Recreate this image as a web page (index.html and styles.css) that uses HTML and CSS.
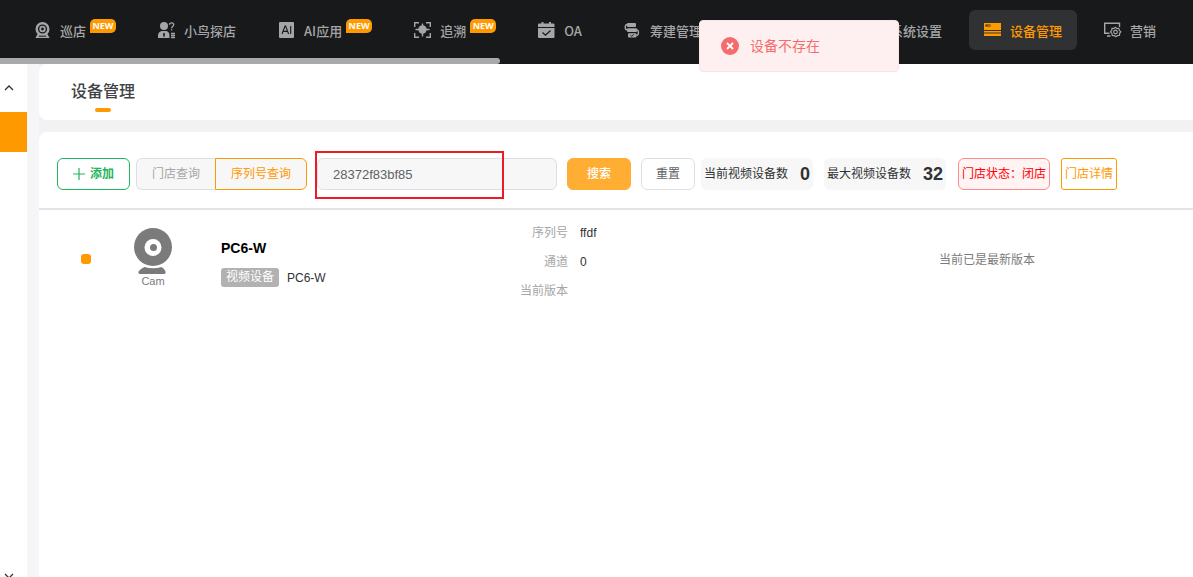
FILE: index.html
```html
<!DOCTYPE html>
<html lang="zh-CN">
<head>
<meta charset="utf-8">
<title>设备管理</title>
<link rel="stylesheet" href="styles.css">
</head>
<body>
<header class="topbar">
  <nav class="nav">
    <a class="nav-item" href="#">
      <svg class="icon" viewBox="0 0 16 16"><circle cx="8.500" cy="7" r="5.800" fill="none" stroke="currentColor" stroke-width="2.400"/><circle cx="8.500" cy="7" r="2.300" fill="none" stroke="currentColor" stroke-width="1.800"/><path d="M3.600 12h9.800l2.200 3.900H1.400z" fill="currentColor"/><path d="M4.800 14.200h7.400" stroke="#18191b"/></svg>
      <span class="nav-text">巡店</span><span class="badge">NEW</span>
    </a>
    <a class="nav-item" href="#">
      <svg class="icon" viewBox="0 0 16 16"><circle cx="6" cy="4" r="4" fill="currentColor"/><path d="M0 16v-2.500C0 10.500 2 9 4.500 9h3c2.500 0 4 1.500 4 4.500V16z" fill="currentColor"/><path d="M6 10.500l1 1.500-.6 3h-.8L5 12z" fill="#18191b"/><path d="M11.500 2.800c0-2.600 4.200-2.600 4.200 0 0 1.700-2.100 1.600-2.100 3.400M13.600 7.200v1.300M13 11.500h4M13 13.500h4M13 15.500h4" fill="none" stroke="currentColor" stroke-width="1.300"/></svg>
      <span class="nav-text">小鸟探店</span>
    </a>
    <a class="nav-item" href="#">
      <svg class="icon" viewBox="0 0 16 16"><rect x="1" width="15" height="16" rx="1" fill="currentColor"/><path d="M4 12l3-8h.6l3 8M5 9.400h4.600M12.700 4v8" fill="none" stroke="#18191b" stroke-width="1.100"/></svg>
      <span class="nav-text">AI应用</span><span class="badge">NEW</span>
    </a>
    <a class="nav-item" href="#">
      <svg class="icon" viewBox="0 0 16 16"><circle cx="8.500" cy="7.500" r="4.200" fill="currentColor"/><path d="M.7 5V.7H5M12 .7h4.300V5M16.300 11v4.300H12M5 15.300H.7V11M8.500 1.500v3M8.500 11v3.500M1.500 7.500H5M12 7.500h3.500" fill="none" stroke="currentColor" stroke-width="1.400"/></svg>
      <span class="nav-text">追溯</span><span class="badge">NEW</span>
    </a>
    <a class="nav-item" href="#">
      <svg class="icon" viewBox="0 0 16 16"><path d="M0 6h16.500v9a1 1 0 0 1-1 1H1a1 1 0 0 1-1-1zM0 5V2.500a1 1 0 0 1 1-1h14.500a1 1 0 0 1 1 1V5zM3.500 0h2v3h-2zM11 0h2v3h-2z" fill="currentColor"/><path d="M4.500 10.500l3 2.700 5-4.700" fill="none" stroke="#18191b" stroke-width="1.300"/></svg>
      <span class="nav-text">OA</span>
    </a>
    <a class="nav-item" href="#">
      <svg class="icon" viewBox="0 0 16 16"><rect x="3" y="1" width="9" height="4" rx="1" fill="currentColor"/><rect x="3" y="6.200" width="10" height="3.800" rx="1" fill="currentColor"/><rect x="4" y="11.200" width="8.500" height="4.300" rx="1" fill="currentColor"/><path d="M3 2.500C.7 2.500.7 7.800 3 7.800M13 8c2 0 2 5.500-.5 5.500" fill="none" stroke="currentColor" stroke-width="1.400"/><path d="M6.500 13.400l1.300.9 2-1.900" fill="none" stroke="#18191b"/></svg>
      <span class="nav-text">筹建管理</span>
    </a>
    <span class="nav-slot"></span>
    <a class="nav-item" href="#">
      <svg class="icon" viewBox="0 0 16 16"><circle cx="8" cy="8" r="5" fill="none" stroke="currentColor" stroke-width="3"/></svg>
      <span class="nav-text">系统设置</span>
    </a>
    <a class="nav-item nav-active" href="#">
      <svg class="icon" viewBox="0 0 16 16"><path d="M0 1h17v7H0zM0 9h17v1.500H0zM0 11.500h17V14H0z" fill="currentColor"/><path d="M1.500 2.500h5v2h-5z" fill="#303133"/><path d="M3.500 3h2.500v1H3.500z" fill="#a86a11"/></svg>
      <span class="nav-text">设备管理</span>
    </a>
    <a class="nav-item" href="#">
      <svg class="icon" viewBox="0 0 16 16"><path d="M5.500 11.200H.7V1.200h14.800V5M3 14h3.500" fill="none" stroke="currentColor" stroke-width="1.400"/><path d="M11.300 5.300l1.500 1.200 2-.2.500 2 1.500 1.500-1.200 1.500-.1 2-2 .3-1.700 1.200-1.500-1.200-2-.2-.4-2-1.400-1.600 1.300-1.500.2-2 2 .1z" fill="none" stroke="currentColor" stroke-width="1.200"/><circle cx="11.500" cy="10" r="1.800" fill="none" stroke="currentColor" stroke-width="1.200"/></svg>
      <span class="nav-text">营销</span>
    </a>
  </nav>
  <div class="scroll-thumb"></div>
</header>
<div class="shell">
  <aside class="sidebar">
    <svg class="chevron" viewBox="0 0 10 6"><path d="M1 5l4-4 4 4" fill="none" stroke="#303133" stroke-width="1.300"/></svg>
    <div class="side-active"></div>
    <svg class="chevron chevron-down" viewBox="0 0 10 6"><path d="M1 1l4 4 4-4" fill="none" stroke="#303133" stroke-width="1.300"/></svg>
  </aside>
  <main class="main">
    <section class="title-card"><h1 class="title">设备管理</h1></section>
    <section class="content-card">
      <form class="toolbar">
        <button type="button" class="btn btn-add"><svg class="plus" viewBox="0 0 12 12"><path d="M6 0v12M0 6h12" stroke="currentColor" stroke-width="1.200"/></svg>添加</button>
        <div class="segment">
          <button type="button" class="btn seg-store">门店查询</button><button type="button" class="btn seg-serial">序列号查询</button>
        </div>
        <div class="search-box">
          <input class="search-input" type="text" aria-label="序列号" value="28372f83bf85">
          <span class="highlight"></span>
        </div>
        <button type="button" class="btn btn-search">搜索</button>
        <button type="button" class="btn btn-reset">重置</button>
        <div class="stat stat-current">当前视频设备数<strong>0</strong></div>
        <div class="stat stat-max">最大视频设备数<strong>32</strong></div>
        <div class="store-state">门店状态：闭店</div>
        <button type="button" class="btn btn-detail">门店详情</button>
      </form>
      <article class="device">
        <input class="device-check" type="checkbox" checked aria-label="PC6-W">
        <figure class="cam">
          <svg class="cam-icon" viewBox="0 0 38 46"><circle cx="19" cy="19" r="19" fill="#7b7b7b"/><circle cx="19" cy="19.500" r="8.500" fill="#fff"/><circle cx="19.500" cy="19.500" r="3.500" fill="#7b7b7b"/><path d="M10.500 39q8.500 2.500 17 0 3 1.500 4 4.500.5 2.500-1.500 2.500H6q-2 0-1.500-2.500 2-3 6-4.500z" fill="#7b7b7b"/></svg>
          <figcaption class="cam-name">Cam</figcaption>
        </figure>
        <div class="device-info">
          <h2 class="device-name">PC6-W</h2>
          <div class="device-kind"><span class="tag">视频设备</span><span>PC6-W</span></div>
        </div>
        <dl class="facts">
          <dt>序列号</dt><dd>ffdf</dd>
          <dt>通道</dt><dd>0</dd>
          <dt>当前版本</dt><dd></dd>
        </dl>
        <p class="version">当前已是最新版本</p>
      </article>
    </section>
  </main>
</div>
<div class="toast" role="alert">
  <svg class="toast-icon" viewBox="0 0 18 18"><circle cx="9" cy="9" r="9" fill="#f56c6c"/><path d="M6 6l6 6M12 6l-6 6" stroke="#fff" stroke-width="1.800"/></svg>
  <span>设备不存在</span>
</div>
</body>
</html>
```

FILE: styles.css
```css
* { box-sizing: border-box; }
body {
  margin: 0;
  height: 100vh;
  display: flex;
  flex-direction: column;
  overflow: hidden;
  background: #f5f6f8;
  color: #303133;
  font: 12px/16px "Liberation Sans", "Noto Sans CJK SC", sans-serif;
}
h1, h2, p, dl, dd, figure { margin: 0; }
button, input { font: inherit; margin: 0; }
svg { display: block; overflow: visible; flex: none; }

.topbar {
  flex: none;
  display: flex;
  flex-direction: column;
  justify-content: space-between;
  height: 64px;
  padding-top: 10px;
  background: #18191b;
}
.nav { display: flex; gap: 12px; padding-left: 19px; }
.nav-item {
  flex: none;
  display: flex;
  align-items: center;
  height: 40px;
  padding: 0 15px;
  border-radius: 6px;
  color: #a6a6a6;
  font: 500 13px/20px "Noto Sans CJK SC", sans-serif;
  text-decoration: none;
  white-space: nowrap;
}
.nav-active { background: #303133; color: #ff9900; }
.nav-slot { flex: none; width: 108px; }
.icon { width: 16px; height: 16px; margin-right: 10px; }
.nav-text { padding-top: 2px; }
.badge {
  align-self: flex-start;
  width: 26px;
  height: 14px;
  margin: 9px 0 0 4px;
  border-radius: 5px 5px 5px 0;
  background: #ff9900;
  color: #fff;
  font: 700 9px/14px "Open Sans", sans-serif;
  text-align: center;
}
.scroll-thumb { width: 500px; height: 6px; border-radius: 0 3px 3px 0; background: #a9a9a9; }

.shell { flex: 1; display: flex; min-height: 0; }
.sidebar {
  flex: none;
  display: flex;
  flex-direction: column;
  width: 27px;
  margin-right: 12px;
  background: #fff;
}
.chevron { width: 10px; height: 6px; margin: 21px 0 21px 4px; }
.side-active { height: 40px; background: #ff9900; }
.chevron-down { margin: auto 0 -2px 4px; }
.main { flex: 1; min-width: 0; display: flex; flex-direction: column; gap: 12px; background: #f2f2f2; }
.title-card { display: flex; padding: 14px 32px 8px; border-radius: 8px 0 0 8px; background: #fff; }
.title {
  display: flex;
  flex-direction: column;
  align-items: center;
  gap: 6px;
  color: #404247;
  font: 500 16px/24px "Noto Sans CJK SC", sans-serif;
}
.title::after { content: ""; width: 16px; height: 4px; border-radius: 2px; background: #ff9900; }
.content-card { flex: 1; border-radius: 8px 0 0 0; background: #fff; }

.toolbar {
  display: flex;
  align-items: center;
  padding: 26px 18px 18px;
  border-bottom: 2px solid #e4e4e4;
}
.btn {
  flex: none;
  height: 32px;
  padding: 0;
  border: 1px solid #dcdfe6;
  border-radius: 6px;
  background: #fff;
  white-space: nowrap;
}
.btn-add {
  display: flex;
  align-items: center;
  justify-content: center;
  gap: 5px;
  width: 73px;
  margin-right: 6px;
  border-color: #1eb55d;
  color: #1eb55d;
  font-weight: 700;
}
.plus { width: 12px; height: 12px; }
.segment { flex: none; display: flex; margin-right: 10px; }
.seg-store {
  width: 79px;
  border-right: 0;
  border-radius: 6px 0 0 6px;
  background: #f7f7f7;
  color: #a6a6a6;
}
.seg-serial {
  width: 92px;
  border-color: #ff9900;
  border-radius: 0 6px 6px 0;
  background: #f7f7f7;
  color: #ff9900;
}
.search-box { position: relative; flex: none; width: 240px; margin-right: 10px; }
.search-input {
  display: block;
  width: 100%;
  height: 32px;
  padding: 0 15px;
  border: 1px solid #dcdfe6;
  border-radius: 6px;
  background: #f7f7f7;
  color: #606266;
  font-size: 13px;
}
.highlight {
  position: absolute;
  top: -7px;
  left: -2px;
  width: 189px;
  height: 48px;
  border: 2px solid #ed1c24;
  pointer-events: none;
}
.btn-search {
  width: 64px;
  margin-right: 10px;
  border-color: #ffad33;
  background: #ffad33;
  color: #fff;
  font-weight: 500;
}
.btn-reset { width: 54px; margin-right: 6px; color: #606266; }
.stat {
  flex: none;
  display: flex;
  align-items: center;
  justify-content: space-between;
  height: 32px;
  padding: 0 3px;
  border-radius: 6px;
  background: #f7f7f7;
}
.stat strong { font-size: 18px; }
.stat-current { width: 112px; margin-right: 11px; }
.stat-max { width: 122px; margin-right: 12px; }
.store-state {
  flex: none;
  height: 32px;
  margin-right: 11px;
  padding: 0 3px;
  border: 1px solid #ff8c8c;
  border-radius: 6px;
  background: #fff3f3;
  color: #ff0000;
  line-height: 30px;
}
.btn-detail { width: 56px; border-color: #ff9900; border-radius: 3px; color: #ff9900; }

.device {
  display: grid;
  grid-template-columns: 10px 38px 307px 452px 1fr;
  align-items: start;
  padding: 14px 18px 14px 42px;
}
.device-check {
  appearance: none;
  width: 10px;
  height: 10px;
  margin-top: 30px;
  border-radius: 3px;
  background: #ff9900;
}
.cam { display: flex; flex-direction: column; align-items: center; margin: 4px -43px 0 43px; }
.cam-icon { width: 38px; height: 46px; }
.cam-name { color: #7b7b7b; font-size: 11px; line-height: 14px; }
.device-info { padding: 14px 0 0 92px; white-space: nowrap; }
.device-name { color: #000; font-size: 14px; line-height: 20px; }
.device-kind { display: flex; align-items: center; gap: 8px; margin-top: 10px; }
.tag { height: 19px; padding: 0 5px; border-radius: 3px; background: #b2b2b2; color: #fff; line-height: 19px; }
.facts {
  display: grid;
  grid-template-columns: 132px 1fr;
  column-gap: 12px;
  row-gap: 13px;
  padding-top: 1px;
}
.facts dt { color: #a6a6a6; text-align: right; }
.version { padding: 28px 0 0 51px; color: #7b7b7b; }

.toast {
  position: absolute;
  top: 20px;
  left: 699px;
  display: flex;
  align-items: center;
  gap: 11px;
  width: 200px;
  height: 52px;
  padding-left: 21px;
  border: 1px solid #fde2e2;
  border-radius: 4px;
  background: #fef0f0;
  color: #f56c6c;
  font-size: 14px;
  line-height: 20px;
}
.toast-icon { width: 18px; height: 18px; }
```
